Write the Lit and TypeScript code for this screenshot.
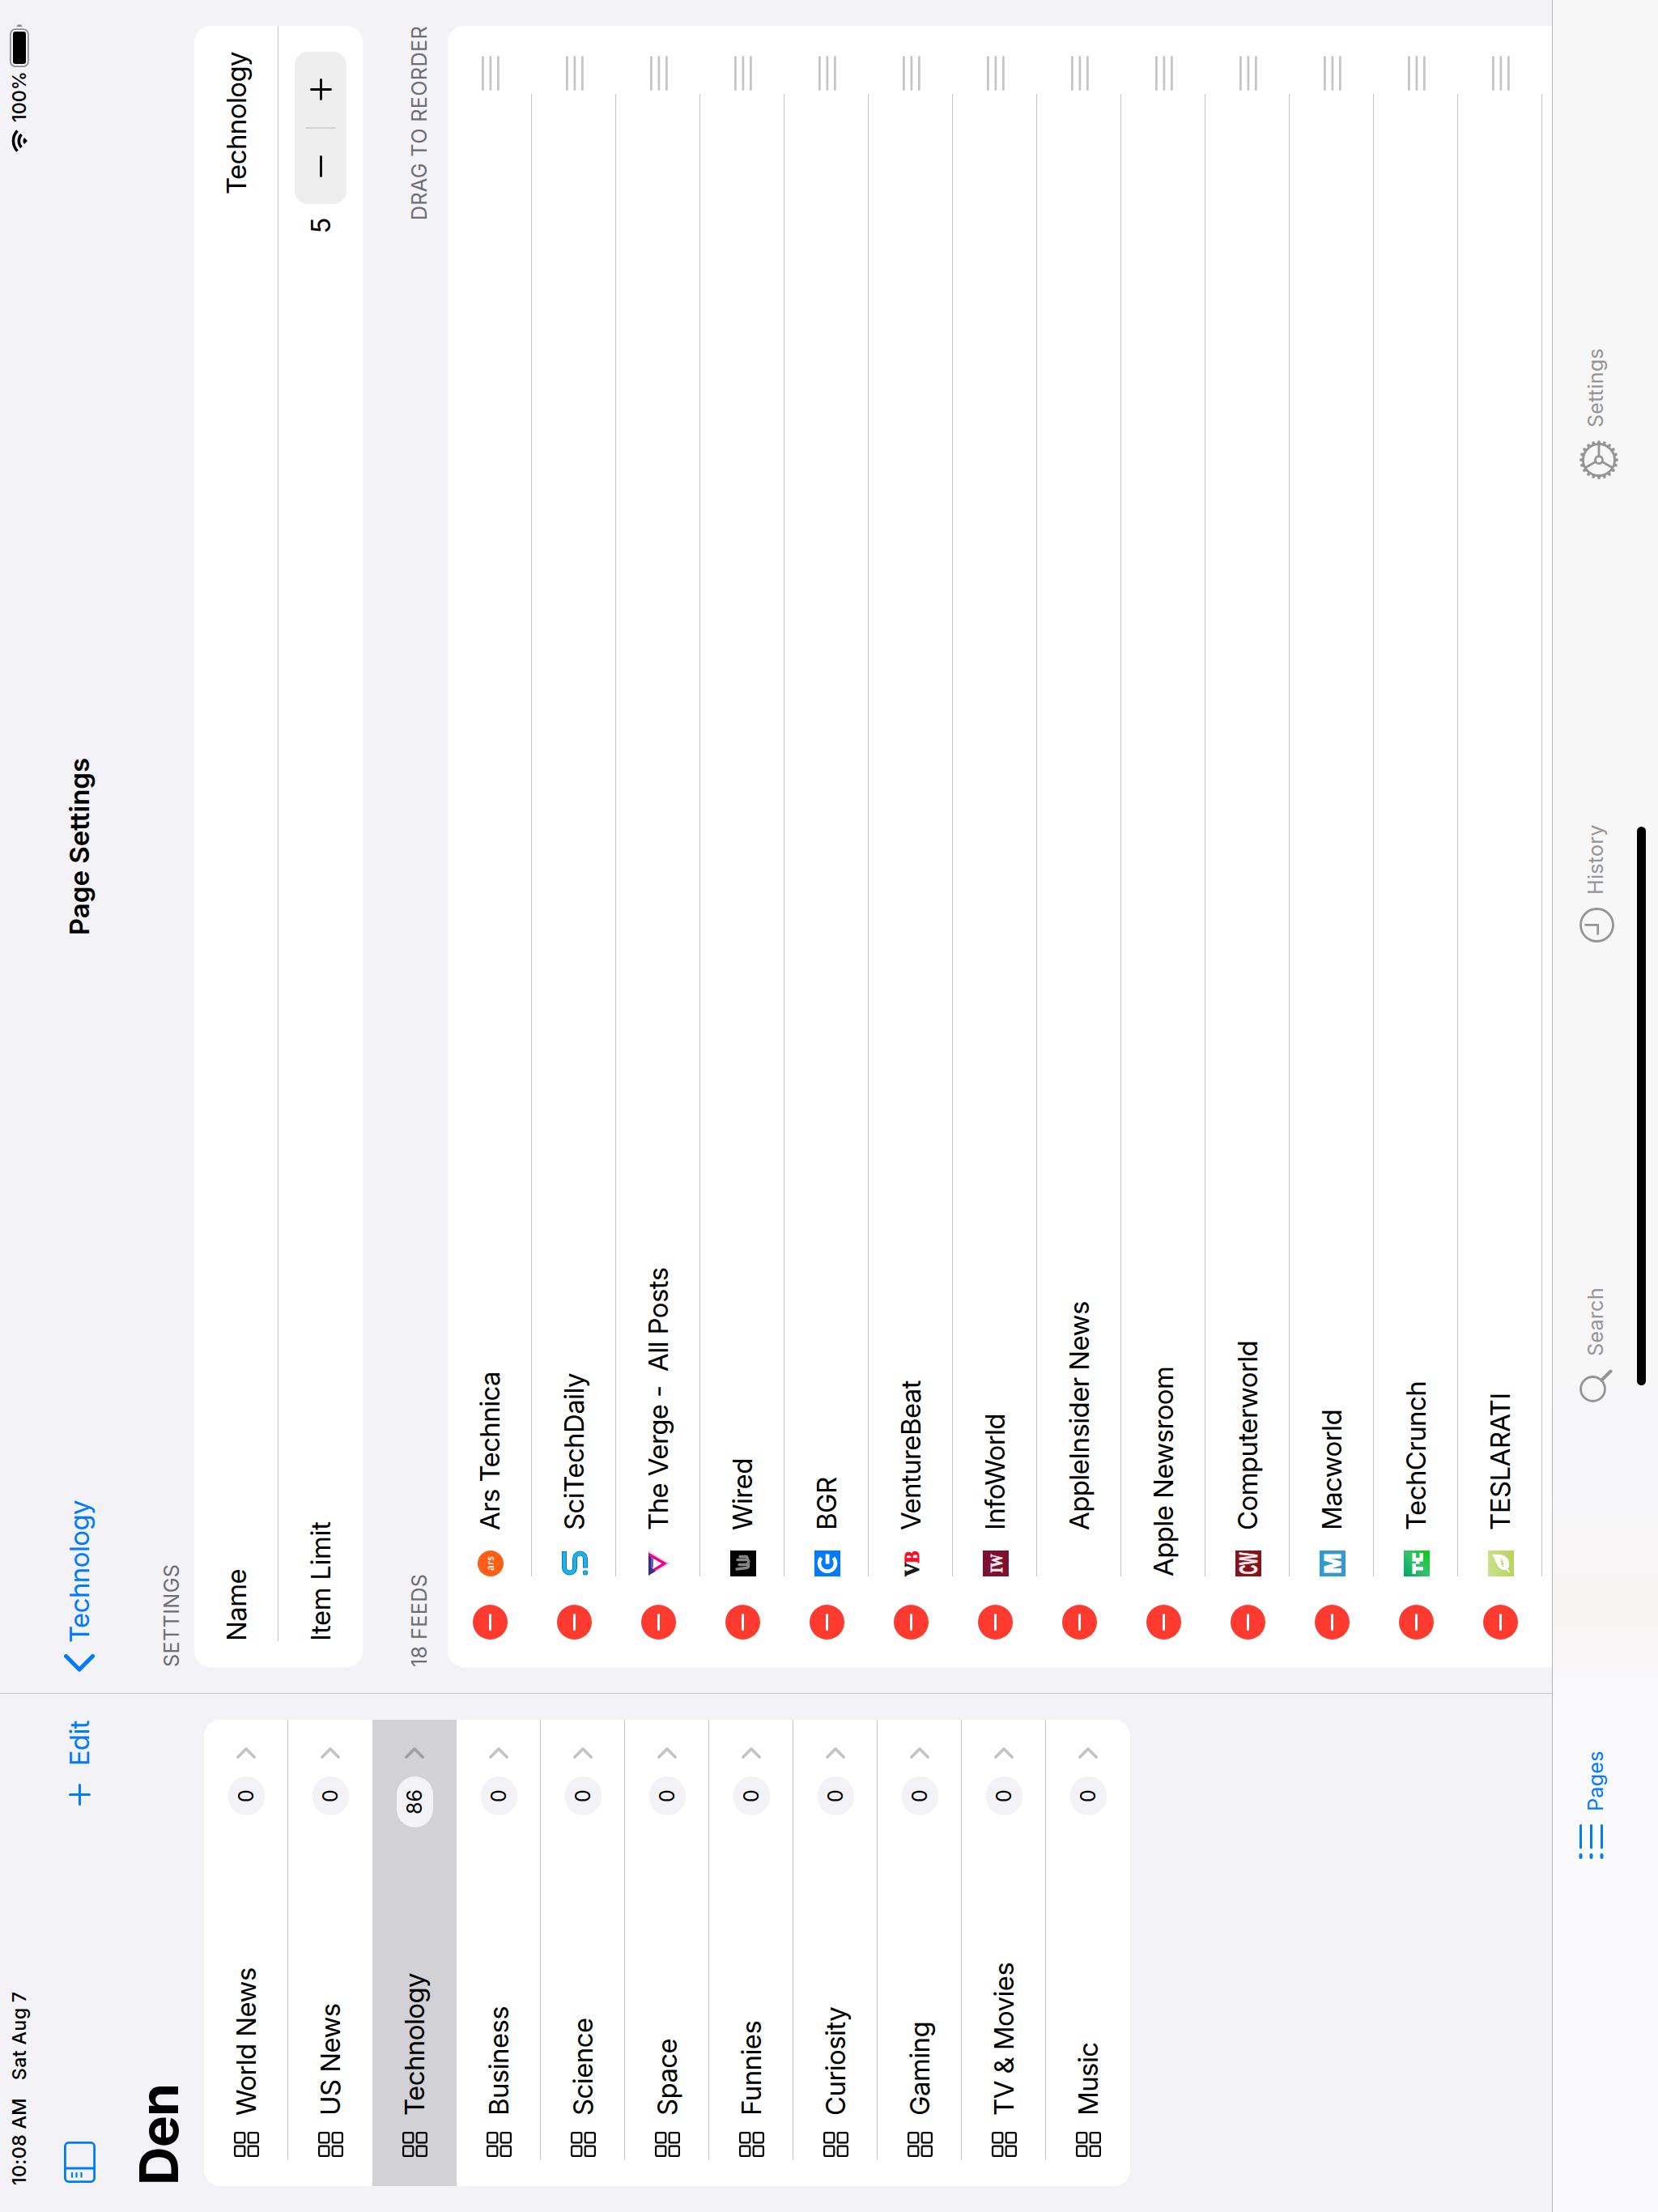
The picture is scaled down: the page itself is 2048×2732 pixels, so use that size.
import { LitElement, html, css, svg, nothing } from "lit";
import { customElement } from "lit/decorators.js";

interface Page { name: string; unread: number; }
interface Feed { title: string; icon?: unknown; bare?: boolean; }

const pages: Page[] = [
  { name: "World News", unread: 0 },
  { name: "US News", unread: 0 },
  { name: "Technology", unread: 86 },
  { name: "Business", unread: 0 },
  { name: "Science", unread: 0 },
  { name: "Space", unread: 0 },
  { name: "Funnies", unread: 0 },
  { name: "Curiosity", unread: 0 },
  { name: "Gaming", unread: 0 },
  { name: "TV & Movies", unread: 0 },
  { name: "Music", unread: 0 },
];

const feeds: Feed[] = [
  {
    title: "Ars Technica",
    icon: svg`<circle cx="16" cy="16" r="16" fill="#ff5e15"/>
      <text x="16" y="20" text-anchor="middle" font-family="Open Sans" font-weight="600" font-size="12" letter-spacing="0" fill="#fff">ars</text>`,
  },
  {
    title: "SciTechDaily",
    icon: svg`<g fill="none" stroke-linejoin="round">
      <path d="M31 3H11a6.500 6.500 0 0 0 0 13h11a6.500 6.500 0 0 1 0 13H10.500" stroke="#0d6d9c" stroke-width="6"/>
      <path d="M30.300 3H11a6.500 6.500 0 0 0 0 13h11a6.500 6.500 0 0 1 0 13H11.200" stroke="#1cb0ee" stroke-width="4.400"/></g>
      <rect x="2" y="26.500" width="5" height="5" rx="1" fill="#1cb0ee" stroke="#0d6d9c" stroke-width=".8"/>`,
  },
  {
    title: "The Verge -  All Posts",
    icon: svg`<path d="M3 3h29L16 30 11 22z" fill="#d9d9d9"/>
      <path d="M7 6h18L16 22z" fill="#fff"/>
      <path d="M1 3h27l-2.500 3.200H11L8.500 10 6.500 12z" fill="#3b2b98"/>
      <path d="M10 6l14-.5-2 3.500H11z" fill="#3b2b98" opacity=".75"/>
      <path d="M29.500 3L16 26 6.500 10.500l3-1.500L16 19.500 25.500 3z" fill="#ec008c"/>`,
  },
  {
    title: "Wired",
    icon: svg`<rect width="32" height="32" fill="#000"/>
      <g fill="none" stroke="#858585" stroke-width="3.400" stroke-linecap="round" stroke-linejoin="round"><path d="M9 8l1.500 12q.5 3 4 2.500V11M15.500 21q2 3 5 1V9M21 21q4 1 3.500-3V12"/></g>`,
  },
  {
    title: "BGR",
    icon: svg`<rect width="32" height="32" fill="#007aff"/>
      <path d="M23 8.600A10 10 0 1 0 23 23.400" fill="none" stroke="#fff" stroke-width="4.600"/>
      <path d="M15.500 13.700h12v4.800h-12z" fill="#fff"/>`,
  },
  {
    title: "VentureBeat",
    icon: svg`<text x="0" y="24.500" textLength="17" lengthAdjust="spacingAndGlyphs" font-family="Liberation Serif" font-weight="700" font-size="26" letter-spacing="0" fill="#15191a" stroke="#15191a" stroke-width="1">V</text>
      <text x="16.500" y="24.500" textLength="15" lengthAdjust="spacingAndGlyphs" font-family="Liberation Serif" font-weight="700" font-size="26" letter-spacing="0" fill="#ff0a22" stroke="#ff0a22" stroke-width="1">B</text>`,
  },
  {
    title: "InfoWorld",
    icon: svg`<rect width="32" height="32" fill="#7d1230"/>
      <text x="4.500" y="24" textLength="23" lengthAdjust="spacingAndGlyphs" font-family="Liberation Serif" font-weight="700" font-size="22" letter-spacing="0" fill="#f6e9ed" stroke="#f6e9ed" stroke-width=".7">IW</text>`,
  },
  { title: "AppleInsider News" },
  { title: "Apple Newsroom", bare: true },
  {
    title: "Computerworld",
    icon: svg`<rect width="32" height="32" fill="#84141b"/>
      <text x="2.500" y="27" textLength="27" lengthAdjust="spacingAndGlyphs" font-family="Liberation Sans" font-weight="700" font-size="31" letter-spacing="0" fill="#fbeeee" stroke="#fbeeee" stroke-width=".6">CW</text>`,
  },
  {
    title: "Macworld",
    icon: svg`<rect width="32" height="32" fill="#3399cf"/>
      <text x="3.500" y="25.500" textLength="25" lengthAdjust="spacingAndGlyphs" font-family="Inter" font-weight="800" font-size="27" letter-spacing="0" fill="#fff" stroke="#fff" stroke-width="1">M</text>`,
  },
  {
    title: "TechCrunch",
    icon: svg`<defs><linearGradient id="tc" x1="0" y1="0" x2="1" y2="1"><stop offset="0" stop-color="#00a562"/><stop offset=".5" stop-color="#35c06f"/><stop offset="1" stop-color="#00d301"/></linearGradient></defs>
      <rect width="32" height="32" fill="url(#tc)"/>
      <path d="M3 10.500h13v4.500h-4v9H7.500v-9H3zM18.500 10.500H29V15h-6v4.500h6V24H18.500v-4.500h-3V15h3z" fill="#fff"/>`,
  },
  {
    title: "TESLARATI",
    icon: svg`<defs><linearGradient id="tl" x1="0" y1="0" x2="0" y2="1"><stop offset="0" stop-color="#cbe08a"/><stop offset="1" stop-color="#b8d45c"/></linearGradient></defs>
      <rect width="32" height="32" fill="url(#tl)"/>
      <path d="M27 5c1 11-1 20-10 21-4 .500-6-.5-8-1.500l-4 3v-1.500l3-3.500C7 11 17 12 27 5z" fill="#fff"/>
      <path d="M12 19l3-2 .5 2 2.500-3 .5 2 3-2" fill="none" stroke="#b8d45c" stroke-width="1.200"/>`,
  },
];

const gridIcon = svg`<g fill="none" stroke="#000" stroke-width="2.200">
  <rect x="1.100" y="1.100" width="12.200" height="12.200" rx="2"/><rect x="17.700" y="1.100" width="12.200" height="12.200" rx="2"/>
  <rect x="1.100" y="17.700" width="12.200" height="12.200" rx="2"/><rect x="17.700" y="17.700" width="12.200" height="12.200" rx="2"/></g>`;

const gearTeeth = Array.from({ length: 20 }, (_, i) =>
  svg`<path d="M21.500 4L22.700 .200h2.600L26.500 4z" transform="rotate(${i * 18} 24 24)"/>`);

@customElement("app-root")
export class AppRoot extends LitElement {
  static styles = css`
    :host { display: block; width: 2048px; height: 2732px; overflow: hidden; font-family: Inter, "Liberation Sans", sans-serif; }
    * { box-sizing: border-box; }
    svg { display: block; flex: none; }
    .screen {
      width: 2732px; height: 2048px; display: flex; flex-direction: column;
      transform-origin: 0 0; transform: translateY(2732px) rotate(-90deg);
      background: linear-gradient(90deg, #f2f2f7 640px, #c6c6c8 640px, #c6c6c8 641px, #f2f2f7 641px);
      color: #000; font-size: 33px; letter-spacing: -0.62px; white-space: nowrap; line-height: 1;
    }
    .status { height: 48px; padding: 0 30px 0 33px; display: flex; align-items: center; justify-content: space-between; font-size: 23.300px; font-weight: 500; letter-spacing: 0.3px; }
    .status-group { display: flex; align-items: center; }
    .date { margin-left: 22px; }
    .percent { margin: 0 5px 0 9px; letter-spacing: 0; }
    .split { height: 1869px; display: flex; overflow: hidden; }
    .sidebar { width: 640px; padding: 0 32px; }
    .detail { flex: 1; margin-left: 1px; padding: 0 32px; }
    .navbar { height: 104px; display: flex; align-items: center; color: #007aff; }
    .sidebar .navbar { padding: 0 1px 3px 4px; }
    .nav-spacer { flex: 1; }
    .edit { margin-left: 22px; }
    .detail .navbar { display: grid; grid-template-columns: 1fr auto 1fr; margin-left: -6px; margin-right: -6px; padding-bottom: 4px; }
    .back { display: flex; align-items: center; gap: 14px; }
    .nav-title { color: #000; font-weight: 600; letter-spacing: 0; }
    .den { margin: 0; height: 100px; padding: 11px 0 0 1px; font-size: 66px; font-weight: 700; letter-spacing: -1px; }
    .card { background: #fff; border-radius: 20px; overflow: hidden; }
    .page-row { height: 104px; display: flex; align-items: center; padding: 0 34px 0 36px; position: relative; }
    .row-line::after { content: ""; position: absolute; left: 32px; right: 0; bottom: 0; height: 1px; background: #c6c6c8; }
    .page-name { flex: 1; margin-left: 20px; }
    .selected { background: #d1d1d6; }
    .badge { height: 45px; min-width: 48px; padding: 1px 16px 0; border-radius: 23px; background: #f2f2f7; display: flex; align-items: center; justify-content: center; font-size: 25px; letter-spacing: 0; margin-right: 22px; }
    .chevron { stroke: #c4c4c6; }
    .selected .chevron { stroke: #a0a0a4; }
    .section-head { height: 88px; display: flex; align-items: flex-end; justify-content: space-between; padding: 0 0 15px; color: #6d6d72; font-size: 25.200px; letter-spacing: 0.35px; }
    .section-head.feeds { height: 105px; padding-bottom: 22px; }
    .setting-row { height: 104px; display: flex; align-items: center; justify-content: space-between; padding: 0 32px; position: relative; }
    .item-limit { letter-spacing: -0.4px; }
    .stepper-group { display: flex; align-items: center; gap: 17px; }
    .stepper { width: 188px; height: 64px; border-radius: 16px; background: #eee; display: flex; align-items: center; }
    .step { flex: 1; display: flex; justify-content: center; }
    .step-line { width: 2px; height: 36px; background: #d3d3d5; }
    .feed-card { border-radius: 20px 20px 0 0; height: 1364px; }
    .feed-row { height: 104px; display: flex; align-items: center; padding: 1px 37px 0 34px; position: relative; }
    .feed-row::after { content: ""; position: absolute; left: 112px; right: 84px; bottom: 0; height: 1px; background: #c6c6c8; }
    .slot { width: 32px; height: 32px; margin-left: 35px; margin-right: 25px; overflow: visible; }
    .feed-title { flex: 1; white-space: pre; }
    .bare { margin-left: 35px; }
    .tabbar { height: 131px; border-top: 1px solid #b3b3b5; background: linear-gradient(90deg, #fafafd 630px, #f8f5f6 690px, #f8f4f4 750px, #f6f6f8 900px, #f7f7f7 1400px); display: grid; grid-template-columns: 564px 568px 572px auto; padding-left: 436px; align-items: start; position: relative; color: #959595; font-size: 25.200px; letter-spacing: 0.2px; }
    .tab { display: flex; align-items: center; gap: 16px; height: 107px; }
    .tab.active { color: #007aff; }
    .list-icon { margin-bottom: 12px; }
    .clock-icon { margin-top: 2px; }
    .gear-icon { margin-top: 6px; }
    .home { position: absolute; left: 1021px; top: 104px; width: 690px; height: 11px; border-radius: 6px; background: #000; }
  `;

  private pageRow(p: Page, i: number) {
    const selected = p.unread > 0;
    const line = i !== 1 && i !== 2 && i !== pages.length - 1;
    return html`<div class="page-row ${selected ? "selected" : ""} ${line ? "row-line" : ""}">
      <svg width="31" height="31" viewBox="0 0 31 31">${gridIcon}</svg>
      <span class="page-name">${p.name}</span>
      <span class="badge">${p.unread}</span>
      <svg class="chevron" width="14" height="24" viewBox="0 0 14 24" fill="none" stroke-width="3.800" stroke-linecap="round" stroke-linejoin="round"><path d="M2 2l10 10L2 22"/></svg>
    </div>`;
  }

  private feedRow(f: Feed) {
    return html`<div class="feed-row">
      <svg width="43" height="43" viewBox="0 0 43 43"><circle cx="21.500" cy="21.500" r="21.500" fill="#ff3b30"/><rect x="11" y="20" width="21" height="3" rx="1.500" fill="#fff"/></svg>
      ${f.bare ? nothing : html`<svg class="slot" viewBox="0 0 32 32">${f.icon ?? nothing}</svg>`}
      <span class="feed-title ${f.bare ? "bare" : ""}">${f.title}</span>
      <svg width="43" height="22" viewBox="0 0 43 22" fill="#c6c6c8"><rect width="43" height="2.800" rx="1.400"/><rect y="9.500" width="43" height="2.800" rx="1.400"/><rect y="19" width="43" height="2.800" rx="1.400"/></svg>
    </div>`;
  }

  render() {
    return html`<div class="screen">
      <div class="status">
        <div class="status-group"><span>10:08 AM</span><span class="date">Sat Aug 7</span></div>
        <div class="status-group">
          <svg width="28" height="20" viewBox="0 0 28 20" fill="none" stroke="#000" stroke-width="3.500"><path d="M1.500 7.500a18 18 0 0 1 25 0M6 12.500a11.500 11.500 0 0 1 16 0"/><path d="M14 20l-4-4a6 6 0 0 1 8 0z" fill="#000" stroke="none"/></svg>
          <span class="percent">100%</span>
          <svg width="53" height="24" viewBox="0 0 53 24"><rect x=".900" y=".900" width="46" height="22" rx="6" fill="none" stroke="#8e8e92" stroke-width="1.800"/><rect x="4" y="4" width="40" height="16" rx="3" fill="#000"/><path d="M50 8q3 1.500 3 4t-3 4z" fill="#8e8e92"/></svg>
        </div>
      </div>
      <div class="split">
        <div class="sidebar">
          <div class="navbar">
            <svg width="51" height="39" viewBox="0 0 51 39" fill="none" stroke="#007aff" stroke-width="2.800"><rect x="1.400" y="1.400" width="48.200" height="36.200" rx="4.500"/><path d="M18 1v37"/><path d="M6.500 10h6.500M6.500 15.500h6.500M6.500 21.500h6.500" stroke-width="2.200"/></svg>
            <span class="nav-spacer"></span>
            <svg width="27" height="27" viewBox="0 0 27 27" stroke="#007aff" stroke-width="3" stroke-linecap="round"><path d="M13.500 1.500v24M1.500 13.500h24"/></svg>
            <span class="edit">Edit</span>
          </div>
          <h1 class="den">Den</h1>
          <div class="card">${pages.map((p, i) => this.pageRow(p, i))}</div>
        </div>
        <div class="detail">
          <div class="navbar">
            <div class="back"><svg width="22" height="38" viewBox="0 0 22 38" fill="none" stroke="#007aff" stroke-width="5" stroke-linecap="round" stroke-linejoin="round"><path d="M19.500 2.500L3 19l16.500 16.500"/></svg><span>Technology</span></div>
            <span class="nav-title">Page Settings</span>
          </div>
          <div class="section-head"><span>SETTINGS</span></div>
          <div class="card">
            <div class="setting-row row-line"><span>Name</span><span>Technology</span></div>
            <div class="setting-row"><span class="item-limit">Item Limit</span>
              <div class="stepper-group"><span>5</span>
                <div class="stepper">
                  <span class="step"><svg width="27" height="27" viewBox="0 0 27 27" stroke="#000" stroke-width="2.800" stroke-linecap="round"><path d="M1.500 13.500h24"/></svg></span>
                  <span class="step-line"></span>
                  <span class="step"><svg width="27" height="27" viewBox="0 0 27 27" stroke="#000" stroke-width="2.800" stroke-linecap="round"><path d="M13.500 1.500v24M1.500 13.500h24"/></svg></span>
                </div>
              </div>
            </div>
          </div>
          <div class="section-head feeds"><span>18 FEEDS</span><span>DRAG TO REORDER</span></div>
          <div class="card feed-card">${feeds.map((f) => this.feedRow(f))}</div>
        </div>
      </div>
      <div class="tabbar">
        <div class="tab active"><svg class="list-icon" width="43" height="31" viewBox="0 0 43 31" stroke="#007aff" stroke-width="3" stroke-linecap="round"><path d="M14 2.500h27.500M14 15.500h27.500M14 28.500h27.500"/><path d="M2 2.500h3M2 15.500h3M2 28.500h3" stroke-width="4"/></svg><span>Pages</span></div>
        <div class="tab"><svg width="41" height="41" viewBox="0 0 41 41" fill="none" stroke="#959595" stroke-width="2.800" stroke-linecap="round"><circle cx="16.500" cy="16.500" r="15"/><path d="M27.500 27.500l11 11" stroke-width="4"/></svg><span>Search</span></div>
        <div class="tab"><svg class="clock-icon" width="43" height="43" viewBox="0 0 43 43" fill="none" stroke="#959595" stroke-width="2.800" stroke-linecap="round" stroke-linejoin="round"><circle cx="21.500" cy="21.500" r="20"/><path d="M21.700 7.500v15.200H10.500"/></svg><span>History</span></div>
        <div class="tab"><svg class="gear-icon" width="48" height="48" viewBox="0 0 48 48" fill="#959595"><g>${gearTeeth}</g><g fill="none" stroke="#959595" stroke-width="2.800"><circle cx="24" cy="24" r="19.500"/><circle cx="24" cy="24" r="4.500"/><path d="M28.500 24h15M21.700 20.100L14.200 7.100M21.700 27.900l-7.500 13"/></g></svg><span>Settings</span></div>
        <div class="home"></div>
      </div>
    </div>`;
  }
}
